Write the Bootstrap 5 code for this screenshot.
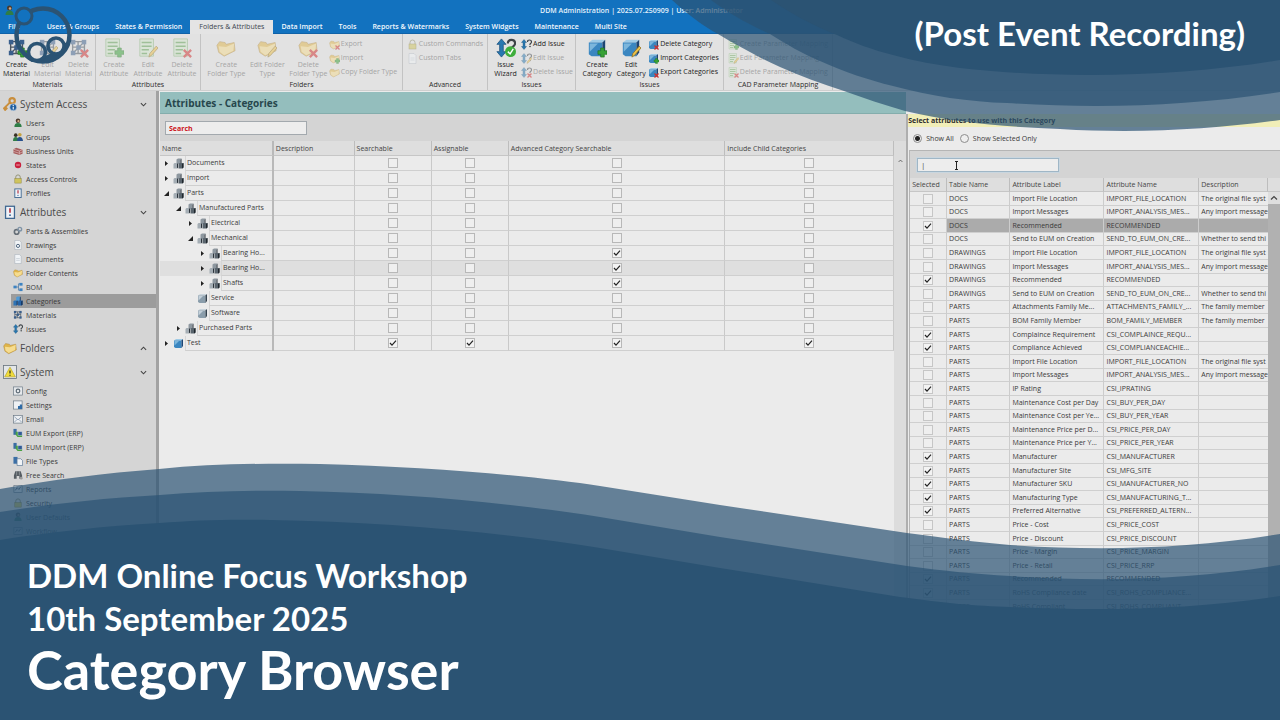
<!DOCTYPE html>
<html lang="en">
<head>
<meta charset="utf-8">
<meta name="viewport" content="width=device-width, initial-scale=1">
<title>DDM Administration - Category Browser</title>
<link href="https://cdn.jsdelivr.net/npm/bootstrap@5.3.0/dist/css/bootstrap.min.css" rel="stylesheet">
<style>
  body { font-family: "Open Sans", "Noto Sans", sans-serif; font-size: 7px; line-height: 9px; color: #3a3a3a; background: #ebebeb; }
  svg { display: block; flex: none; }
  button, input { font: inherit; }
  .stage { min-height: 100vh; height: 100vh; }
  .titlebar { height: 20px; background: #1272bf; color: #e4f1fb; font-weight: 600; }
  .ribbon-tabs { height: 14px; background: #1272bf; border-bottom: 1px solid #0f62a8; }
  .ribbon-tabs .nav-link { padding: 0 8px; line-height: 14px; color: #f2f8fd; font-weight: 600; border-radius: 0; }
  .ribbon-tabs .nav-link.file-tab { margin-right: 11px; }
  .ribbon-tabs .nav-link.active { background: #e4e4e4; color: #3c4650; font-weight: 400; height: 14px; padding: 0 9px; }
  .ribbon { height: 57px; background: #e2e2e2; border-bottom: 1px solid #cfcfcf; }
  .rgroup { border-right: 1px solid #c3c3c3; padding: 3px 1px 0; }
  .rgroup .caption { line-height: 11px; color: #2c2c2c; }
  .tool { border: 0; background: none; padding: 0; color: #222; display: flex; text-align: center; white-space: nowrap; }
  .tool-lg { flex-direction: column; align-items: center; line-height: 9px; }
  .tool-lg svg { width: 20px; height: 20px; margin: 1px 0 2px; }
  .tool-sm { align-items: center; gap: 1px; line-height: 14px; height: 14px; }
  .tool-sm svg { width: 11px; height: 11px; }
  .tool:disabled { color: #a5a5a5; }
  .tool:disabled svg { opacity: .5; }
  .w-30 { width: 31px; } .w-34 { width: 34px; } .w-41 { width: 41px; }
  .g-mat { width: 96px; } .g-att { width: 105px; } .g-fol { width: 202px; } .g-adv { width: 85px; }
  .g-iss { width: 88px; } .g-cat { width: 148px; } .g-cad { width: 109px; }
  .sidebar { width: 159px; background: #d5d5d5; border-right: 3px solid #a2a2a2; padding-top: 1px; }
  .side-head { height: 24px; font-size: 10px; color: #4a4a4a; gap: 3px; padding: 0 9px 0 3px; border: 0; background: none; }
  .side-head svg.lead-ico { width: 14px; height: 14px; }
  .side-list a { display: flex; align-items: center; gap: 3px; height: 14px; margin-left: 11px; padding-left: 2px; color: #3a3a3a; text-decoration: none; }
  .side-list a.active { background: #9c9c9c; }
  .side-list svg { width: 10px; height: 10px; }
  .head-teal { height: 22px; margin-top: 1px; background: #94bebd; border-bottom: 1px solid #84adac; font-size: 10px; font-weight: 700; color: #27474d; padding: 0 5px; line-height: 22px; }
  .search-area { height: 27px; background: #d4d4d4; padding: 7px 5px 6px; }
  .searchbox { width: 142px; height: 14px; border: 1px solid #a3a9ae; background: #ededed; padding: 0 3px; border-radius: 0; outline: 0; color: #333; }
  .searchbox.red::placeholder { color: #cc1420; opacity: 1; font-weight: 700; }
  .tree, .attrs { table-layout: fixed; border-collapse: separate; border-spacing: 0; margin: 0; width: 100%; }
  .tree th, .attrs th { font-weight: 400; background: #dedede; border-right: 1px solid #bdbdbd; border-bottom: 1px solid #c6c6c6; padding: 0 2px; white-space: nowrap; line-height: 13px; color: #444; }
  .tree th { height: 15px; }
  .tree td { height: 15px; padding: 0; border-right: 1px solid #c9c9c9; border-bottom: 1px solid #cfcfcf; background: #ebebeb; vertical-align: middle; }
  .tree tr.hot td { background: #dfdfdf; }
  .tree td:first-child, .tree th:first-child { border-right: 2px solid #b9b9b9; }
  .tree td:first-child { border-bottom: 0; background: #ebebeb; }
  .tree tr.hot .nlabel { background: #dfdfdf; }
  .tree .node { height: 15px; display: flex; align-items: center; gap: 1px; }
  .tree .twist { width: 10px; flex: none; }
  .tree .twist svg { width: 5px; height: 5px; margin: 0 2px; }
  .tree .node svg.nico { width: 11px; height: 11px; }
  .tree .nlabel { flex: 1; min-width: 0; align-self: stretch; line-height: 14px; border-left: 1px solid #d6d6d6; border-bottom: 1px solid #cfcfcf; padding-left: 1px; }
  .cb { appearance: none; display: block; width: 10px; height: 10px; margin: 0 auto; border: 1px solid #b8b8b8; background: #efefef; border-radius: 0; }
  .attrs .cb { border-color: #c6c6c6; }
  .cb:checked { background: #f3f3f3 url("data:image/svg+xml,%3Csvg xmlns='http://www.w3.org/2000/svg' viewBox='0 0 8 8'%3E%3Cpath d='M1 4l2 2.2L7 1.6' fill='none' stroke='%23222' stroke-width='1.2'/%3E%3C/svg%3E") center/8px no-repeat; }
  .rail { width: 12px; background: #dcdcdc; }
  .center-pane { background: #ebebeb; padding-left: 1px; }
  .right-pane { flex: 0 0 29.2%; background: #ebebeb; border-left: 2px solid #aeaeae; margin-top: 23px; }
  .select-head { height: 13px; background: #f1eeb8; font-weight: 700; line-height: 14px; color: #2c2c2c; }
  .radios { height: 23px; padding: 0 5px 1px; gap: 6px; }
  .rb { appearance: none; width: 9px; height: 9px; margin: 0; border: 1px solid #8d8d8d; border-radius: 50%; background: #eee; }
  .rb:checked { background: radial-gradient(circle, #222 0 2px, #eee 3px); }
  .attr-box { border: 1px solid #b5b5b5; border-right: 0; margin-left: 1px; }
  .attr-search { height: 27px; background: #d4d4d4; padding: 7px; }
  .attr-search .searchbox { border-color: #9fb6c6; box-shadow: 0 0 0 1px #c9d6df; }
  .attrs th { height: 14px; }
  .attrs td { height: 14px; padding: 0 2px; border-right: 1px solid #cccccc; border-bottom: 1px solid #cfcfcf; white-space: nowrap; overflow: hidden; text-overflow: ellipsis; line-height: 12px; }
  .attrs td:last-child { text-overflow: clip; padding-right: 0; border-right: 0; }
  .attrs tr:nth-child(5n+2) td, .attrs tr:nth-child(5n+4) td { height: 13px; }
  .attrs tr.sel td:not(:first-child) { background: #ababab; }
  .vscroll { width: 12px; background: #b1b1b1; }
  .vscroll .top-th { height: 14px; background: #dedede; border-bottom: 1px solid #c6c6c6; }
  .vscroll .up { height: 12px; background: #dedede; }
  .waves, .banner { position: absolute; inset: 0; width: 100%; height: 100%; pointer-events: none; }
  .ibeam { position: absolute; left: 44px; top: 10px; }
  .ring { position: absolute; left: 12px; top: 4px; }
  .banner { font-family: Lato, "Open Sans", sans-serif; font-weight: 700; color: #fff; }
  .event-note { font-size: 33px; line-height: 40px; padding: 13px 35px 0; }
  .lines { padding: 0 27px 20px; }
  .lines h1 { font-size: 54px; line-height: 60px; font-weight: 700; }
  .lines h2 { font-size: 33px; line-height: 43px; font-weight: 700; }
</style>
</head>
<body>
<svg width="0" height="0" class="position-absolute" aria-hidden="true">
  <defs>
    <symbol id="i-mat" viewBox="0 0 22 22"><path d="M4 4h13v13H4zM4 10h13M10 4v13M4 17L17 4" fill="none" stroke="#4b5560" stroke-width="1.5"/><g fill="#3a5f8c"><rect x="2" y="2" width="5" height="5"/><rect x="14" y="2" width="5" height="5"/><rect x="2" y="14" width="5" height="5"/><rect x="8" y="8" width="5" height="5"/><rect x="14" y="14" width="5" height="5"/></g></symbol>
    <symbol id="i-sheet" viewBox="0 0 22 22"><path d="M2 1h15v19H2z" fill="#d3e6cd" stroke="#8db682"/><path d="M4 5h11M4 9h11M4 13h8M4 17h6" stroke="#5fa052" stroke-width="1.6"/></symbol>
    <symbol id="i-folder" viewBox="0 0 22 22"><path d="M1 8l3-4 6 1 1 2 9-2 1 9-12 6-6-4z" fill="#e0b54a" stroke="#a9843a" stroke-width=".7"/><path d="M3 9l8 1 9-4-1 8-10 5-5-4z" fill="#f5dc90"/></symbol>
    <symbol id="i-cube" viewBox="0 0 22 22"><path d="M2 5l4-3h14l-3 3z" fill="#9fcbe6"/><path d="M2 5h15v15H5l-3-2z" fill="#3a86c0"/><path d="M17 5l3-3v14l-3 4z" fill="#1c4574"/><path d="M3 6h9l-9 9z" fill="#7cb6dc"/></symbol>
    <symbol id="i-gcube" viewBox="0 0 22 22"><path d="M2 5l4-3h14l-3 3z" fill="#c9d4dc"/><path d="M2 5h15v15H5l-3-2z" fill="#8a9dab"/><path d="M17 5l3-3v14l-3 4z" fill="#34424e"/><path d="M3 6h9l-9 9z" fill="#c3d0d9"/></symbol>
    <symbol id="i-cubes" viewBox="0 0 22 22"><path d="M7 3l3-2h7l-2 3v8H7z" fill="#8d979f"/><path d="M15 4l2-3v9l-2 3z" fill="#2b333b"/><path d="M1 12l2-2h7v9l-2 2H1z" fill="#a4adb4"/><path d="M8 12l2-2v9l-2 2z" fill="#2b333b"/><path d="M11 12l2-2h8v9l-2 2h-8z" fill="#59646d"/><path d="M18 12l3-2v9l-3 2z" fill="#20272d"/></symbol>
    <symbol id="i-bcubes" viewBox="0 0 22 22"><path d="M7 3l3-2h7l-2 3v8H7z" fill="#4f9ad6"/><path d="M15 4l2-3v9l-2 3z" fill="#173a66"/><path d="M1 12l2-2h7v9l-2 2H1z" fill="#2f74b5"/><path d="M8 12l2-2v9l-2 2z" fill="#12305a"/><path d="M11 12l2-2h8v9l-2 2h-8z" fill="#2763a5"/><path d="M18 12l3-2v9l-3 2z" fill="#12305a"/></symbol>
    <symbol id="i-arrows" viewBox="0 0 22 22"><path d="M6 1l5 6H8v8h3l-5 6-5-6h3V7H1z" fill="#2878b0" stroke="#174f7c" stroke-width=".8"/><path d="M13 6q0-4 4-4t4 4q0 2-3 4v2" fill="none" stroke="#3d4348" stroke-width="2.4"/><circle cx="18" cy="15" r="1.6" fill="#3d4348"/></symbol>
    <symbol id="o-plus" viewBox="0 0 22 22"><path d="M15 11h4v3h3v4h-3v3h-4v-3h-3v-4h3z" fill="#37a136" stroke="#1d6e1d" stroke-width=".7"/></symbol>
    <symbol id="o-pen" viewBox="0 0 22 22"><path d="M12 21l1-4 7-8 2 2-7 8z" fill="#ecc24a" stroke="#8d6a1c" stroke-width=".8"/></symbol>
    <symbol id="o-x" viewBox="0 0 22 22"><path d="M13 13l8 8M21 13l-8 8" stroke="#cf2e2e" stroke-width="2.600"/></symbol>
    <symbol id="o-ok" viewBox="0 0 22 22"><circle cx="16" cy="15" r="6" fill="#3fae3c"/><path d="M13 15l2.500 2.500L19 12" fill="none" stroke="#fff" stroke-width="1.600"/></symbol>
    <symbol id="i-user" viewBox="0 0 22 22"><circle cx="11" cy="6" r="5" fill="#4b3a2c"/><path d="M3 20q0-9 8-9t8 9z" fill="#2f7d46"/><circle cx="12" cy="7" r="2.500" fill="#d4a984"/></symbol>
    <symbol id="i-users" viewBox="0 0 22 22"><circle cx="6" cy="7" r="4" fill="#3a3326"/><path d="M0 20q0-9 6-9t6 9z" fill="#2f7d46"/><circle cx="15" cy="6" r="4" fill="#c4a13f"/><path d="M9 20q0-9 6-9t7 9z" fill="#27508c"/></symbol>
    <symbol id="i-brick" viewBox="0 0 22 22"><path d="M1 7l6-3 14 4v9l-7 3-13-4z" fill="#a65a5a"/><path d="M1 7l13 4 7-3M1 12l13 4 7-3M14 11v8" stroke="#e6caca" fill="none" stroke-width="1.300"/></symbol>
    <symbol id="i-stop" viewBox="0 0 22 22"><circle cx="11" cy="11" r="7" fill="#c9203c"/><path d="M7 11h8" stroke="#f0b0ba" stroke-width="2"/></symbol>
    <symbol id="i-lock" viewBox="0 0 22 22"><path d="M6 11V7q0-5 5-5t5 5v4" fill="none" stroke="#8e8e6e" stroke-width="2"/><rect x="4" y="10" width="14" height="10" fill="#cfc45e" stroke="#8a8136"/></symbol>
    <symbol id="i-tag" viewBox="0 0 22 22"><rect x="4" y="2" width="14" height="19" fill="#eef2f7" stroke="#3f6791" stroke-width="2"/><path d="M11 5v7" stroke="#b22a3a" stroke-width="2.500"/><circle cx="11" cy="16" r="1.400" fill="#2f5f95"/></symbol>
    <symbol id="i-gears" viewBox="0 0 22 22"><circle cx="8" cy="13" r="5" fill="none" stroke="#666f78" stroke-width="3.500"/><circle cx="15" cy="7" r="4" fill="none" stroke="#7f93a6" stroke-width="3"/></symbol>
    <symbol id="i-page" viewBox="0 0 22 22"><path d="M4 1h10l4 4v16H4z" fill="#f1f4f7" stroke="#9aa5b0"/><path d="M7 10h8M7 14h8" stroke="#a8b4bf"/></symbol>
    <symbol id="i-draw" viewBox="0 0 22 22"><path d="M4 1h10l4 4v16H4z" fill="#f1f4f7" stroke="#9aa5b0"/><circle cx="11" cy="13" r="3.500" fill="none" stroke="#566c84" stroke-width="2.200"/></symbol>
    <symbol id="i-bom" viewBox="0 0 22 22"><path d="M7 11h5M12 4v14M12 4h3M12 18h3" stroke="#3b6f9f" stroke-width="1.500" fill="none"/><rect x="1" y="8" width="7" height="6" fill="#3d83c2"/><rect x="14" y="2" width="7" height="6" fill="#3d83c2"/><rect x="14" y="14" width="7" height="6" fill="#3d83c2"/></symbol>
    <symbol id="i-gear" viewBox="0 0 22 22"><rect x="1" y="2" width="20" height="18" fill="#e6e9ec" stroke="#6a7885" stroke-width="1.500"/><circle cx="11" cy="11" r="4" fill="none" stroke="#5d6a76" stroke-width="2.600"/></symbol>
    <symbol id="i-set" viewBox="0 0 22 22"><rect x="1" y="2" width="19" height="18" fill="#eef1f4" stroke="#6a7885" stroke-width="1.500"/><path d="M11 20v-7h4v-3h5v10z" fill="#2f6ba6"/></symbol>
    <symbol id="i-mail" viewBox="0 0 22 22"><rect x="1" y="3" width="20" height="17" fill="#eceff2" stroke="#6a7885" stroke-width="1.500"/><path d="M3 6l8 7 8-7M3 18l6-6M19 18l-6-6" fill="none" stroke="#7388a0" stroke-width="1.500"/></symbol>
    <symbol id="i-net" viewBox="0 0 22 22"><rect x="1" y="2" width="7" height="13" fill="#3b6da3"/><path d="M6 8h5v6h9v6H10l-4-5z" fill="#4aa043"/><rect x="11" y="8" width="9" height="8" fill="#315a96" stroke="#c8d4e2"/></symbol>
    <symbol id="i-files" viewBox="0 0 22 22"><rect x="1" y="2" width="9" height="15" fill="#3b6fa6"/><path d="M9 6h8l4 4v11H9z" fill="#f1f4f7" stroke="#5a7896" stroke-width="1.500"/></symbol>
    <symbol id="i-bino" viewBox="0 0 22 22"><path d="M5 3h12l3 9v7h-6v-6H8v6H2v-7z" fill="#555c62"/><circle cx="18" cy="18" r="3" fill="#999"/><path d="M8 3v9M14 3v9" stroke="#c5c9cc"/></symbol>
    <symbol id="i-chart" viewBox="0 0 22 22"><rect x="2" y="3" width="18" height="16" fill="#dfe3e7" stroke="#6a7885" stroke-width="1.500"/><path d="M5 14l4-6 4 4 4-6" fill="none" stroke="#43566a" stroke-width="1.800"/></symbol>
    <symbol id="i-key" viewBox="0 0 26 26"><circle cx="17" cy="7" r="5" fill="none" stroke="#c98e3c" stroke-width="4"/><path d="M13 10L2 21l2 3 4-4" fill="none" stroke="#c98e3c" stroke-width="3.500"/><circle cx="19" cy="19" r="6.500" fill="#1f5d9e" stroke="#dfe8f0"/><path d="M19 18v5M19 14.500v2" stroke="#fff" stroke-width="2"/></symbol>
    <symbol id="i-warn" viewBox="0 0 26 26"><rect x="1" y="1" width="24" height="24" fill="#e3e6e8" stroke="#69747e" stroke-width="1.500"/><path d="M13 4l10 18H3z" fill="#f0dc3a" stroke="#a89416"/><path d="M13 10v6M13 18v2" stroke="#222" stroke-width="2.200"/></symbol>
    <symbol id="t-right" viewBox="0 0 5 5"><path d="M1 0l3 2.500L1 5z" fill="#222"/></symbol>
    <symbol id="t-down" viewBox="0 0 5 5"><path d="M5 0v5H0z" fill="#222"/></symbol>
    <symbol id="c-down" viewBox="0 0 8 8"><path d="M1 2.500l3 3 3-3" fill="none" stroke="#444" stroke-width="1.200"/></symbol>
    <symbol id="c-up" viewBox="0 0 8 8"><path d="M1 5.500l3-3 3 3" fill="none" stroke="#444" stroke-width="1.200"/></symbol>
  </defs>
</svg>

<main class="stage position-relative overflow-hidden d-flex flex-column">
  <header class="titlebar d-flex align-items-center flex-shrink-0 px-1">
    <svg width="11" height="11"><use href="#i-user"/></svg>
    <div class="flex-grow-1 text-center pe-2">DDM Administration | 2025.07.250909 | User: Administrator</div>
  </header>
  <nav class="ribbon-tabs nav flex-nowrap flex-shrink-0 text-nowrap" aria-label="Ribbon">
    <a class="nav-link file-tab" href="#">File</a>
    <a class="nav-link" href="#">Users &amp; Groups</a>
    <a class="nav-link" href="#">States &amp; Permission</a>
    <a class="nav-link active" href="#">Folders &amp; Attributes</a>
    <a class="nav-link" href="#">Data Import</a>
    <a class="nav-link" href="#">Tools</a>
    <a class="nav-link" href="#">Reports &amp; Watermarks</a>
    <a class="nav-link" href="#">System Widgets</a>
    <a class="nav-link" href="#">Maintenance</a>
    <a class="nav-link" href="#">Multi Site</a>
  </nav>
  <div class="ribbon d-flex flex-shrink-0" id="ribbon"></div>

  <div class="d-flex flex-grow-1 overflow-hidden">
    <aside class="sidebar flex-shrink-0" id="sidebar"></aside>

    <section class="center-pane flex-grow-1 overflow-hidden">
      <h2 class="head-teal mb-0">Attributes - Categories</h2>
      <div class="search-area"><input class="searchbox red d-block" type="text" placeholder="Search" aria-label="Search"></div>
      <div class="d-flex h-100">
        <div class="flex-grow-1">
          <table class="tree">
            <colgroup><col style="width:15.5%"><col style="width:11%"><col style="width:10.5%"><col style="width:10.5%"><col style="width:29.5%"><col style="width:23%"></colgroup>
            <thead><tr><th>Name</th><th>Description</th><th>Searchable</th><th>Assignable</th><th>Advanced Category Searchable</th><th>Include Child Categories</th></tr></thead>
            <tbody id="tree"></tbody>
          </table>
        </div>
        <div class="rail flex-shrink-0 pt-3 ps-1"><svg width="5" height="8"><use href="#c-up" width="5" height="8"/></svg></div>
      </div>
    </section>

    <section class="right-pane overflow-hidden">
      <div class="select-head">Select attributes to use with this Category</div>
      <div class="radios d-flex align-items-center">
        <label class="d-flex align-items-center gap-1"><input class="rb" type="radio" name="show" checked>Show All</label>
        <label class="d-flex align-items-center gap-1"><input class="rb" type="radio" name="show">Show Selected Only</label>
      </div>
      <div class="attr-box">
        <div class="attr-search position-relative">
          <input class="searchbox d-block" type="text" value="|" aria-label="Filter attributes">
          <svg class="ibeam" width="5" height="9"><path d="M1 .5h3M2.500 .5v8M1 8.500h3" stroke="#222" fill="none"/></svg>
        </div>
        <div class="d-flex">
          <div class="flex-grow-1 overflow-hidden">
            <table class="attrs">
              <colgroup><col style="width:10.3%"><col style="width:17.7%"><col style="width:26.3%"><col style="width:26.5%"><col style="width:19.2%"></colgroup>
              <thead><tr><th>Selected</th><th>Table Name</th><th>Attribute Label</th><th>Attribute Name</th><th>Description</th></tr></thead>
              <tbody id="attrs"></tbody>
            </table>
          </div>
          <div class="vscroll flex-shrink-0"><div class="top-th"></div><div class="up d-flex justify-content-center align-items-center"><svg width="8" height="8"><use href="#c-up"/></svg></div></div>
        </div>
      </div>
    </section>
  </div>

  <svg class="waves" viewBox="0 0 1280 720" preserveAspectRatio="none" aria-hidden="true">
    <g fill="#2b5373">
      <path fill-opacity=".7" d="M672 0C690 16 703 26 718 34C738 46 758 57 780 67C800 76 822 84 844 91C864 98 884 105 905 111C955 123 1010 127 1060 129C1140 134 1215 129 1280 120V0z"/>
      <path fill-opacity=".7" d="M711 0C728 13 748 24 770 34C786 44 803 54 820 61C845 72 868 80 893 86C930 96 970 102 1007 103C1100 109 1190 106 1280 92V0z"/>
      <path d="M771 0C790 13 812 25 837 35C854 43 873 50 893 55C915 61 937 65 960 68C1065 80 1185 76 1280 60V0z"/>
      <path fill-opacity=".7" d="M0 489C50 480 105 473 159 469C210 464 265 463 320 464C430 467 535 476 600 486L720 505L907 533C945 538 975 542 1010 545C1100 551 1190 549 1280 534V720H0z"/>
      <path fill-opacity=".7" d="M0 512C50 504 105 498 160 495C205 491 255 490 300 491C405 493 510 503 600 517L720 537L907 566C945 571 975 574 1010 576C1100 582 1190 580 1280 565V720H0z"/>
      <path d="M0 540C50 532 105 526 160 523C195 520 235 519 270 520C385 522 500 532 600 548L720 568L900 597C945 603 975 606 1010 607C1100 611 1190 610 1280 596V720H0z"/>
    </g>
  </svg>
  <svg class="ring" width="62" height="62" viewBox="12 4 62 62" aria-hidden="true">
    <mask id="cut"><rect x="0" y="0" width="90" height="90" fill="#fff"/><circle cx="24" cy="16" r="8"/><circle cx="37" cy="52" r="8"/><circle cx="56" cy="46" r="8"/></mask>
    <g fill="none" stroke="#2b5373">
      <circle cx="43" cy="35" r="26.500" stroke-width="4.500" mask="url(#cut)"/>
      <path d="M28 54q8 9 20 5q11-3 18-16" stroke-width="8" mask="url(#cut)"/>
      <circle cx="24" cy="16" r="8" stroke-width="3"/><circle cx="37" cy="52" r="8.500" stroke-width="3.500"/><circle cx="56" cy="46" r="8" stroke-width="3.500"/>
    </g>
  </svg>
  <div class="banner d-flex flex-column justify-content-between">
    <div class="event-note text-end">(Post Event Recording)</div>
    <div class="lines">
      <h2 class="mb-0">DDM Online Focus Workshop</h2>
      <h2 class="mb-0">10th September 2025</h2>
      <h1 class="mb-0">Category Browser</h1>
    </div>
  </div>
</main>

<script src="https://cdn.jsdelivr.net/npm/bootstrap@5.3.0/dist/js/bootstrap.bundle.min.js"></script>
<script>
  const icon = (names, cls = '') => `<svg class="${cls}" viewBox="0 0 22 22" aria-hidden="true">${names.split('+').map(n => `<use href="#${n}"/>`).join('')}</svg>`;

  /* Ribbon: [caption, width class, large tools, small tools]; tool = [icon, label, enabled] */
  const ribbon = [
    ['Materials', 'g-mat', 'w-30', [['i-mat+o-plus', 'Create<br>Material', 1], ['i-mat+o-pen', 'Edit<br>Material'], ['i-mat+o-x', 'Delete<br>Material']], []],
    ['Attributes', 'g-att', 'w-34', [['i-sheet+o-plus', 'Create<br>Attribute'], ['i-sheet+o-pen', 'Edit<br>Attribute'], ['i-sheet+o-x', 'Delete<br>Attribute']], []],
    ['Folders', 'g-fol', 'w-41', [['i-folder', 'Create<br>Folder Type'], ['i-folder+o-pen', 'Edit Folder<br>Type'], ['i-folder+o-x', 'Delete<br>Folder Type']], [['i-folder+o-x', 'Export'], ['i-folder+o-plus', 'Import'], ['i-folder', 'Copy Folder Type']]],
    ['Advanced', 'g-adv', '', [], [['i-lock', 'Custom Commands'], ['i-page', 'Custom Tabs']]],
    ['Issues', 'g-iss', 'w-30', [['i-arrows+o-ok', 'Issue<br>Wizard', 1]], [['i-arrows', 'Add Issue', 1], ['i-arrows+o-pen', 'Edit Issue'], ['i-arrows+o-x', 'Delete Issue']]],
    ['Issues', 'g-cat', 'w-34', [['i-cube+o-plus', 'Create<br>Category', 1], ['i-cube+o-pen', 'Edit<br>Category', 1]], [['i-cube+o-x', 'Delete Category', 1], ['i-cube+o-plus', 'Import Categories', 1], ['i-cube+o-x', 'Export Categories', 1]]],
    ['CAD Parameter Mapping', 'g-cad', '', [], [['i-sheet+o-plus', 'Create Parameter Mapping'], ['i-sheet+o-pen', 'Edit Parameter Mapping'], ['i-sheet+o-x', 'Delete Parameter Mapping']]]
  ];
  const tool = (t, cls) => `<button type="button" class="tool ${cls}"${t[2] ? '' : ' disabled'}>${icon(t[0])}<span>${t[1]}</span></button>`;
  document.getElementById('ribbon').innerHTML = ribbon.map(([cap, w, bw, big, small]) => `
    <div class="rgroup ${w} d-flex flex-column justify-content-between flex-shrink-0">
      <div class="d-flex justify-content-center">${big.map(t => tool(t, 'tool-lg ' + bw)).join('')}
        ${small.length ? `<div>${small.map(t => tool(t, 'tool-sm')).join('')}</div>` : ''}</div>
      <div class="caption text-center">${cap}</div>
    </div>`).join('');

  const side = [
    ['i-key', 'System Access', 'down', [['i-user', 'Users'], ['i-users', 'Groups'], ['i-brick', 'Business Units'], ['i-stop', 'States'], ['i-lock', 'Access Controls'], ['i-tag', 'Profiles']]],
    ['i-tag', 'Attributes', 'down', [['i-gears', 'Parts & Assemblies'], ['i-draw', 'Drawings'], ['i-page', 'Documents'], ['i-folder', 'Folder Contents'], ['i-bom', 'BOM'], ['i-bcubes', 'Categories'], ['i-mat', 'Materials'], ['i-arrows', 'Issues']]],
    ['i-folder', 'Folders', 'up', []],
    ['i-warn', 'System', 'down', [['i-gear', 'Config'], ['i-set', 'Settings'], ['i-mail', 'Email'], ['i-net', 'EUM Export (ERP)'], ['i-net', 'EUM Import (ERP)'], ['i-files', 'File Types'], ['i-bino', 'Free Search'], ['i-chart', 'Reports'], ['i-lock', 'Security'], ['i-user', 'User Defaults'], ['i-chart', 'Workflow']]]
  ];
  document.getElementById('sidebar').innerHTML = side.map(([ic, label, dir, items]) => `
    <button type="button" class="side-head d-flex align-items-center w-100">${icon(ic, 'lead-ico')}<span class="flex-grow-1 text-start">${label}</span>
      <svg width="7" height="7"><use href="#c-${dir}" width="7" height="7"/></svg></button>
    <div class="side-list">${items.map(([i, t]) => `<a href="#"${t === 'Categories' ? ' class="active"' : ''}>${icon(i)}<span>${t.replace('&', '&amp;')}</span></a>`).join('')}</div>`).join('');

  /* Tree: [depth, twist, icon, label, searchable, assignable, advanced, children] */
  const tree = [
    [0, 'right', 'i-cubes', 'Documents', 0, 0, 0, 0], [0, 'right', 'i-cubes', 'Import', 0, 0, 0, 0], [0, 'down', 'i-cubes', 'Parts', 0, 0, 0, 0],
    [1, 'down', 'i-cubes', 'Manufactured Parts', 0, 0, 0, 0], [2, 'right', 'i-cubes', 'Electrical', 0, 0, 0, 0], [2, 'down', 'i-cubes', 'Mechanical', 0, 0, 0, 0],
    [3, 'right', 'i-cubes', 'Bearing Ho...', 0, 0, 1, 0], [3, 'right', 'i-cubes', 'Bearing Ho...', 0, 0, 1, 0], [3, 'right', 'i-cubes', 'Shafts', 0, 0, 1, 0],
    [2, '', 'i-gcube', 'Service', 0, 0, 0, 0], [2, '', 'i-gcube', 'Software', 0, 0, 0, 0], [1, 'right', 'i-cubes', 'Purchased Parts', 0, 0, 0, 0],
    [0, 'right', 'i-cube', 'Test', 1, 1, 1, 1]
  ];
  const cols = ['Searchable', 'Assignable', 'Advanced Category Searchable', 'Include Child Categories'];
  document.getElementById('tree').innerHTML = tree.map((r, n) => `<tr${n === 7 ? ' class="hot"' : ''}>
    <td><div class="node text-nowrap" style="padding-left:${2 + r[0] * 12}px"><span class="twist">${r[1] ? `<svg><use href="#t-${r[1]}"/></svg>` : ''}</span>${icon(r[2], 'nico')}<span class="nlabel">${r[3]}</span></div></td><td></td>
    ${cols.map((c, i) => `<td><input class="cb" type="checkbox" aria-label="${r[3]}: ${c}"${r[4 + i] ? ' checked' : ''}></td>`).join('')}</tr>`).join('');

  const attrs = `0|DOCS|Import File Location|IMPORT_FILE_LOCATION|The original file syst
0|DOCS|Import Messages|IMPORT_ANALYSIS_MES...|Any import message
1|DOCS|Recommended|RECOMMENDED|
0|DOCS|Send to EUM on Creation|SEND_TO_EUM_ON_CRE...|Whether to send thi
0|DRAWINGS|Import File Location|IMPORT_FILE_LOCATION|The original file syst
0|DRAWINGS|Import Messages|IMPORT_ANALYSIS_MES...|Any import message
1|DRAWINGS|Recommended|RECOMMENDED|
0|DRAWINGS|Send to EUM on Creation|SEND_TO_EUM_ON_CRE...|Whether to send thi
0|PARTS|Attachments Family Me...|ATTACHMENTS_FAMILY_...|The family member
0|PARTS|BOM Family Member|BOM_FAMILY_MEMBER|The family member
1|PARTS|Complaince Requirement|CSI_COMPLAINCE_REQU...|
1|PARTS|Compliance Achieved|CSI_COMPLIANCEACHIE...|
0|PARTS|Import File Location|IMPORT_FILE_LOCATION|The original file syst
0|PARTS|Import Messages|IMPORT_ANALYSIS_MES...|Any import message
1|PARTS|IP Rating|CSI_IPRATING|
0|PARTS|Maintenance Cost per Day|CSI_BUY_PER_DAY|
0|PARTS|Maintenance Cost per Ye...|CSI_BUY_PER_YEAR|
0|PARTS|Maintenance Price per D...|CSI_PRICE_PER_DAY|
0|PARTS|Maintenance Price per Y...|CSI_PRICE_PER_YEAR|
1|PARTS|Manufacturer|CSI_MANUFACTURER|
1|PARTS|Manufacturer Site|CSI_MFG_SITE|
1|PARTS|Manufacturer SKU|CSI_MANUFACTURER_NO|
1|PARTS|Manufacturing Type|CSI_MANUFACTURING_T...|
1|PARTS|Preferred Alternative|CSI_PREFERRED_ALTERN...|
0|PARTS|Price - Cost|CSI_PRICE_COST|
0|PARTS|Price - Discount|CSI_PRICE_DISCOUNT|
0|PARTS|Price - Margin|CSI_PRICE_MARGIN|
0|PARTS|Price - Retail|CSI_PRICE_RRP|
1|PARTS|Recommended|RECOMMENDED|
1|PARTS|RoHS Compliance date|CSI_ROHS_COMPLIANCE...|
0|PARTS|RoHS Compliant|CSI_ROHS_COMPLIANT|
0|PARTS|Supplier|CSI_SUPPLIER|`.split('\n').map(l => l.split('|'));
  document.getElementById('attrs').innerHTML = attrs.map((r, n) => `<tr${n === 2 ? ' class="sel"' : ''}>
    <td><input class="cb" type="checkbox" aria-label="${r[1]} ${r[2]}"${r[0] === '1' ? ' checked' : ''}></td><td>${r[1]}</td><td>${r[2]}</td><td>${r[3]}</td><td>${r[4]}</td></tr>`).join('');
</script>
</body>
</html>
